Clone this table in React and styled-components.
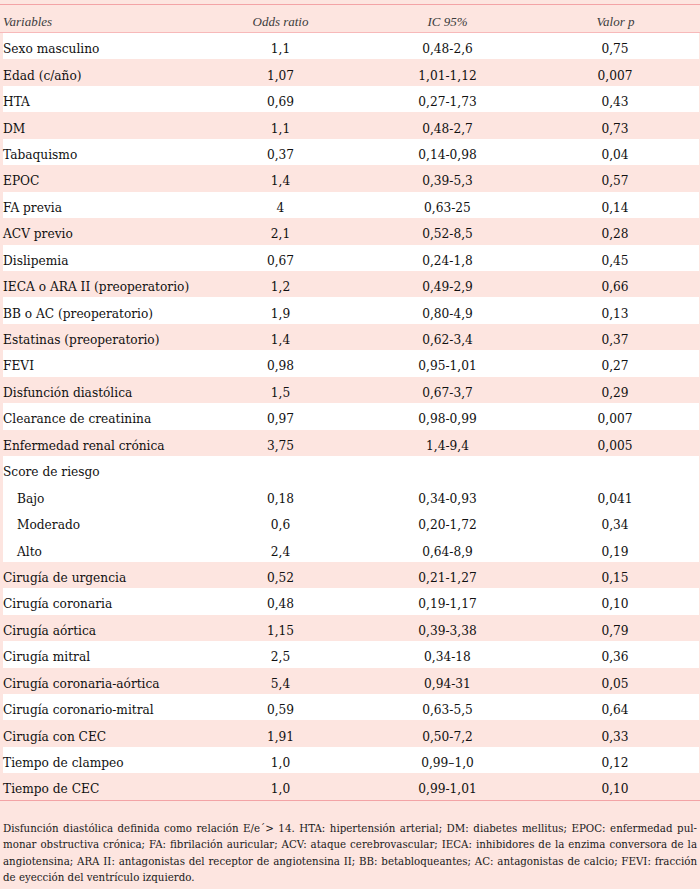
import React from "react";
import styled, { createGlobalStyle } from "styled-components";

const Global = createGlobalStyle`
  html, body { margin: 0; padding: 0; background: #fde5e0; }
  body { width: 700px; height: 889px; overflow: hidden; }
`;

const Page = styled.div`
  width: 700px;
  height: 889px;
  background: #fde5e0;
  font-family: "DejaVu Serif", "Liberation Serif", serif;
  color: #111;
  padding-top: 4px;
  box-sizing: border-box;
`;

const Table = styled.div`
  border-top: 1.5px solid #f3a3a6;
  border-bottom: 1.5px solid #f3a3a6;
`;

const Grid = styled.div`
  display: grid;
  grid-template-columns: 194px 167px 167px 1fr;
  align-items: center;
  margin-left: 3px;
  margin-right: 1px;
`;

const HeadRow = styled(Grid)`
  height: 28px;
  border-bottom: 1.5px solid #f7b9ba;
  margin-left: 0;
  margin-right: 0;
  padding-left: 3px;
  padding-top: 6px;
  box-sizing: border-box;
`;

const HeadCell = styled.div`
  font-family: "Liberation Serif", "DejaVu Serif", serif;
  font-style: italic;
  font-size: 13px;
  color: #3c3c3c;
  text-align: ${(p) => (p.$left ? "left" : "center")};
`;

const Row = styled(Grid)`
  height: 26.45px;
  background: ${(p) => (p.$pink ? "#fde5e0" : "#ffffff")};
  font-size: 12.2px;
  padding-top: 6px;
  box-sizing: border-box;
`;

const Label = styled.div`
  padding-left: ${(p) => (p.$indent ? "14px" : "0")};
  white-space: nowrap;
`;

const Num = styled.div`
  text-align: center;
`;

const Foot = styled.div`
  padding: 19px 3px 0 3px;
  font-size: 10.25px;
  line-height: 16.5px;
  color: #1a1a1a;
`;

const FootLine = styled.div`
  text-align: justify;
  text-align-last: ${(p) => (p.$last ? "left" : "justify")};
  white-space: nowrap;
`;

const rows = [
  ["Sexo masculino", "1,1", "0,48-2,6", "0,75", 0],
  ["Edad (c/año)", "1,07", "1,01-1,12", "0,007", 1],
  ["HTA", "0,69", "0,27-1,73", "0,43", 0],
  ["DM", "1,1", "0,48-2,7", "0,73", 1],
  ["Tabaquismo", "0,37", "0,14-0,98", "0,04", 0],
  ["EPOC", "1,4", "0,39-5,3", "0,57", 1],
  ["FA previa", "4", "0,63-25", "0,14", 0],
  ["ACV previo", "2,1", "0,52-8,5", "0,28", 1],
  ["Dislipemia", "0,67", "0,24-1,8", "0,45", 0],
  ["IECA o ARA II (preoperatorio)", "1,2", "0,49-2,9", "0,66", 1],
  ["BB o AC (preoperatorio)", "1,9", "0,80-4,9", "0,13", 0],
  ["Estatinas (preoperatorio)", "1,4", "0,62-3,4", "0,37", 1],
  ["FEVI", "0,98", "0,95-1,01", "0,27", 0],
  ["Disfunción diastólica", "1,5", "0,67-3,7", "0,29", 1],
  ["Clearance de creatinina", "0,97", "0,98-0,99", "0,007", 0],
  ["Enfermedad renal crónica", "3,75", "1,4-9,4", "0,005", 1],
  ["Score de riesgo", "", "", "", 0],
  ["Bajo", "0,18", "0,34-0,93", "0,041", 0, true],
  ["Moderado", "0,6", "0,20-1,72", "0,34", 0, true],
  ["Alto", "2,4", "0,64-8,9", "0,19", 0, true],
  ["Cirugía de urgencia", "0,52", "0,21-1,27", "0,15", 1],
  ["Cirugía coronaria", "0,48", "0,19-1,17", "0,10", 0],
  ["Cirugía aórtica", "1,15", "0,39-3,38", "0,79", 1],
  ["Cirugía mitral", "2,5", "0,34-18", "0,36", 0],
  ["Cirugía coronaria-aórtica", "5,4", "0,94-31", "0,05", 1],
  ["Cirugía coronario-mitral", "0,59", "0,63-5,5", "0,64", 0],
  ["Cirugía con CEC", "1,91", "0,50-7,2", "0,33", 1],
  ["Tiempo de clampeo", "1,0", "0,99–1,0", "0,12", 0],
  ["Tiempo de CEC", "1,0", "0,99-1,01", "0,10", 1],
];

const footLines = [
  "Disfunción diastólica definida como relación E/e´> 14. HTA: hipertensión arterial; DM: diabetes mellitus; EPOC: enfermedad pul-",
  "monar obstructiva crónica; FA: fibrilación auricular; ACV: ataque cerebrovascular; IECA: inhibidores de la enzima conversora de la",
  "angiotensina; ARA II: antagonistas del receptor de angiotensina II; BB: betabloqueantes; AC: antagonistas de calcio; FEVI: fracción",
  "de eyección del ventrículo izquierdo.",
];

export default function App() {
  return (
    <>
      <Global />
      <Page>
        <Table>
          <HeadRow>
            <HeadCell $left>Variables</HeadCell>
            <HeadCell>Odds ratio</HeadCell>
            <HeadCell>IC 95%</HeadCell>
            <HeadCell>Valor p</HeadCell>
          </HeadRow>
          {rows.map(([label, or, ci, p, pink, indent]) => (
            <Row key={label} $pink={!!pink}>
              <Label $indent={indent}>{label}</Label>
              <Num>{or}</Num>
              <Num>{ci}</Num>
              <Num>{p}</Num>
            </Row>
          ))}
        </Table>
        <Foot>
          {footLines.map((l, i) => (
            <FootLine key={i} $last={i === footLines.length - 1}>
              {l}
            </FootLine>
          ))}
        </Foot>
      </Page>
    </>
  );
}
